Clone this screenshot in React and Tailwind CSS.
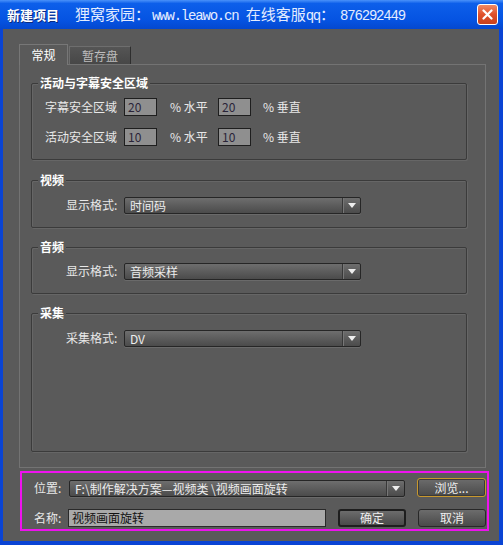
import React from "react";

function Arrow() {
  return (
    <svg width="8" height="5" viewBox="0 0 8 5">
      <path d="M0 0H8L4 5Z" fill="#eeeeee" />
    </svg>
  );
}

function Select({ value, className }) {
  return (
    <div
      className={`flex h-[17px] items-stretch rounded-[2px] border border-[#262626] bg-gradient-to-b from-[#6e6e6e] to-[#4b4b4b] shadow-[0_1px_0_#6a6a6a] ${className}`}
    >
      <div className="flex-1 overflow-hidden whitespace-nowrap pl-[5px] text-[12px] leading-[15px] text-[#ededed]">
        {value}
      </div>
      <div className="flex w-[18px] items-center justify-center border-l border-[#383838] shadow-[inset_1px_0_0_#777]">
        <Arrow />
      </div>
    </div>
  );
}

function Btn({ children, className }) {
  return (
    <div
      className={`flex items-center justify-center rounded-[3px] bg-gradient-to-b from-[#6c6c6c] to-[#4a4a4a] text-[12px] leading-none text-[#eeeeee] ${className}`}
    >
      {children}
    </div>
  );
}

function NumInput({ value }) {
  return (
    <div className="h-[18px] w-[33px] border border-[#1e1e1e] bg-[#8f8f8f] pl-[3px] text-[12px] leading-[16px] text-[#2a2438]">
      {value}
    </div>
  );
}

function Group({ title, className, children }) {
  return (
    <div
      className={`relative w-[436px] rounded-[2px] border border-[#3b3b3b] shadow-[inset_1px_1px_0_#666,1px_1px_0_#666] ${className}`}
    >
      <span className="absolute left-[6px] top-[-9px] bg-[#5a5a5a] px-[2px] text-[12px] font-bold leading-[16px] text-white">
        {title}
      </span>
      {children}
    </div>
  );
}

export default function App() {
  return (
    <div className="flex h-[545px] w-[503px] flex-col bg-[#0a44d4] font-['Noto_Sans_CJK_SC',sans-serif]">
      {/* title bar */}
      <div className="flex h-[29px] items-center bg-[linear-gradient(to_bottom,#4a92fa_0%,#0d5fea_12%,#0553e2_70%,#0448cf_100%)] pl-[7px] pr-[5px]">
        <span className="text-[13px] font-bold leading-none text-white [text-shadow:1px_1px_0_#0a2a80]">
          新建项目
        </span>
        <div className="ml-[16px] flex items-baseline whitespace-nowrap text-[#e4ecff]">
          <span className="text-[15px] leading-none">狸窝家园：</span>
          <span className="ml-[2px] font-['Liberation_Mono',monospace] text-[14px] leading-none tracking-[-1.2px]">
            www.leawo.cn&nbsp;
          </span>
          <span className="text-[15px] leading-none">在线客服</span>
          <span className="font-['Liberation_Mono',monospace] text-[14px] leading-none tracking-[-1.2px]">qq</span>
          <span className="text-[15px] leading-none">：</span>
          <span className="ml-[5px] font-['Liberation_Mono',monospace] text-[14px] leading-none tracking-[-1.2px]">
            876292449
          </span>
        </div>
        <div className="ml-auto flex h-[21px] w-[21px] items-center justify-center rounded-[3px] border border-white bg-[linear-gradient(to_bottom,#f08a66,#e0502a_50%,#c8401c)]">
          <svg width="11" height="11" viewBox="0 0 11 11">
            <path d="M1.5 1.5L9.5 9.5M9.5 1.5L1.5 9.5" stroke="white" strokeWidth="2.2" strokeLinecap="round" />
          </svg>
        </div>
      </div>

      {/* body */}
      <div className="mb-[4px] ml-[3px] mr-[4px] flex flex-1 flex-col bg-[#5a5a5a] pl-[16px] pt-[15px]">
        {/* tabs */}
        <div className="relative z-10 -mb-px flex h-[21px] items-end">
          <div className="flex h-[21px] w-[49px] items-center justify-center border-l border-r border-t border-[#777] bg-[#5a5a5a] text-[12px] leading-none text-white">
            常规
          </div>
          <div className="mb-px ml-[1px] flex h-[18px] w-[62px] items-center justify-center border-l border-r border-t border-[#6e6e6e] border-r-[#2e2e2e] bg-gradient-to-b from-[#555] to-[#474747] text-[12px] leading-none text-[#bdbdbd]">
            暂存盘
          </div>
        </div>

        {/* panel */}
        <div className="flex h-[404px] w-[467px] flex-col border border-[#737373] pl-[11px] pt-[18px]">
          <Group title="活动与字幕安全区域" className="h-[77px] pl-[13px] pt-[14px]">
            <div className="flex h-[18px] items-center text-[12px] text-[#e8e8e8]">
              <span className="w-[79px]">字幕安全区域</span>
              <NumInput value="20" />
              <span className="w-[61px] pl-[13px]">% 水平</span>
              <NumInput value="20" />
              <span className="pl-[12px]">% 垂直</span>
            </div>
            <div className="mt-[12px] flex h-[18px] items-center text-[12px] text-[#e8e8e8]">
              <span className="w-[79px]">活动安全区域</span>
              <NumInput value="10" />
              <span className="w-[61px] pl-[13px]">% 水平</span>
              <NumInput value="10" />
              <span className="pl-[12px]">% 垂直</span>
            </div>
          </Group>

          <Group title="视频" className="mt-[20px] h-[48px] pl-[34px] pt-[15px]">
            <div className="flex items-center text-[12px] text-[#e8e8e8]">
              <span className="w-[58px]">显示格式:</span>
              <Select value="时间码" className="w-[237px]" />
            </div>
          </Group>

          <Group title="音频" className="mt-[19px] h-[47px] pl-[34px] pt-[14px]">
            <div className="flex items-center text-[12px] text-[#e8e8e8]">
              <span className="w-[58px]">显示格式:</span>
              <Select value="音频采样" className="w-[237px]" />
            </div>
          </Group>

          <Group title="采集" className="mt-[19px] h-[139px] pl-[34px] pt-[15px]">
            <div className="flex items-center text-[12px] text-[#e8e8e8]">
              <span className="w-[58px]">采集格式:</span>
              <Select value="DV" className="w-[237px]" />
            </div>
          </Group>
        </div>

        {/* bottom highlighted box */}
        <div className="ml-[1px] mt-[3px] h-[60px] w-[469px] border-2 border-[#ee12ee] pl-[12px] pt-[5px]">
          <div className="flex items-end text-[12px] text-[#e8e8e8]">
            <span className="mb-[1px] w-[35px] leading-[16px]">位置:</span>
            <Select value="F:\制作解决方案—视频类 \视频画面旋转" className="w-[336px]" />
            <Btn className="ml-[12px] h-[19px] w-[69px] border border-[#c8982e] shadow-[inset_0_0_0_1px_#3a3a3a]">
              浏览...
            </Btn>
          </div>
          <div className="mt-[12px] flex items-center text-[12px] text-[#e8e8e8]">
            <span className="w-[34px]">名称:</span>
            <div className="h-[18px] w-[258px] border border-[#2a2a2a] bg-[#a9a9a9] pl-[3px] text-[12px] leading-[16px] text-[#111]">
              视频画面旋转
            </div>
            <Btn className="ml-[12px] h-[18px] w-[68px] border-2 border-[#1e1e1e]">确定</Btn>
            <Btn className="ml-[12px] h-[18px] w-[68px] border border-[#282828]">取消</Btn>
          </div>
        </div>
      </div>
    </div>
  );
}
